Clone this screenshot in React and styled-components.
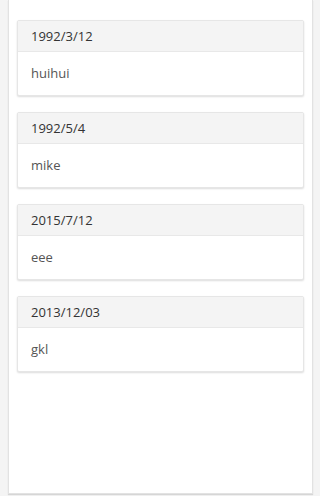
import React from 'react';
import styled, { createGlobalStyle } from 'styled-components';

const GlobalStyle = createGlobalStyle`
  html, body {
    margin: 0;
    padding: 0;
    background: #f4f4f4;
    font-family: "Open Sans", "Liberation Sans", sans-serif;
  }
`;

const Page = styled.div`
  height: 496px;
  padding: 0 7px 0 8px;
  box-sizing: border-box;
`;

const Panel = styled.div`
  height: 494px;
  box-sizing: border-box;
  background: #fff;
  border: 1px solid #e2e2e2;
  border-top: none;
  box-shadow: 0 1px 1px rgba(0, 0, 0, 0.12);
  padding: 20px 8px;
  display: flex;
  flex-direction: column;
  gap: 16px;
`;

const Card = styled.div`
  background: #fff;
  border: 1px solid #e6e6e6;
  border-radius: 2px;
  box-shadow: 0 1px 2px rgba(0, 0, 0, 0.14);
`;

const CardHeader = styled.div`
  height: 30px;
  line-height: 30px;
  padding: 0 13px;
  background: #f4f4f4;
  border-bottom: 1px solid #e8e8e8;
  font-size: 13px;
  color: #333;
`;

const CardBody = styled.div`
  height: 43px;
  line-height: 43px;
  padding: 0 13px;
  font-size: 13px;
  color: #555;
`;

const items = [
  { date: '1992/3/12', name: 'huihui' },
  { date: '1992/5/4', name: 'mike' },
  { date: '2015/7/12', name: 'eee' },
  { date: '2013/12/03', name: 'gkl' },
];

const App = () => (
  <Page>
    <GlobalStyle />
    <Panel>
      {items.map((item) => (
        <Card key={item.date}>
          <CardHeader>{item.date}</CardHeader>
          <CardBody>{item.name}</CardBody>
        </Card>
      ))}
    </Panel>
  </Page>
);

export default App;
